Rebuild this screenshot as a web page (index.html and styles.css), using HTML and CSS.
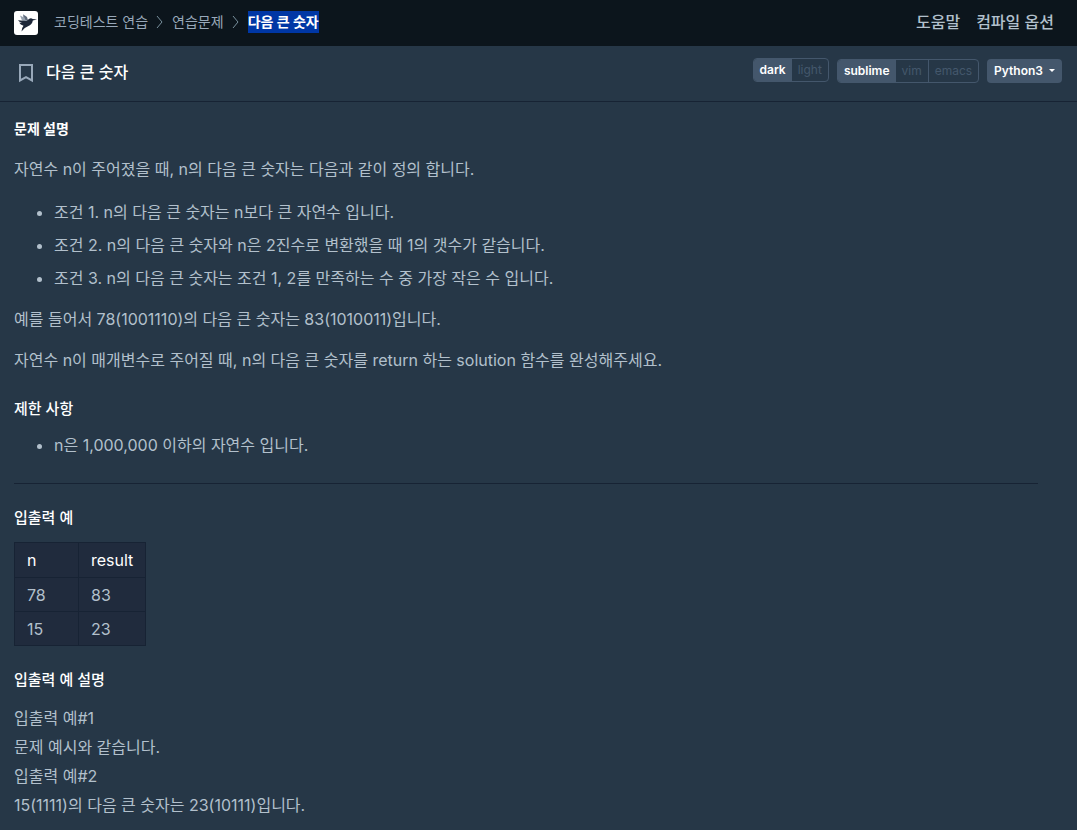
FILE: index.html
```html
<!DOCTYPE html>
<html lang="ko">
<head>
  <meta charset="UTF-8">
  <meta name="viewport" content="width=device-width, initial-scale=1.0">
  <title>다음 큰 숫자</title>
  <link rel="stylesheet" href="styles.css">
</head>
<body>

<header class="navbar">
  <a class="logo" href="#" aria-label="홈">
    <svg width="24" height="24" viewBox="0 0 24 24">
      <rect width="24" height="24" rx="3" fill="#fff"/>
      <path d="M6 4.5 9 6V3.5L13.5 8.5 13 11 8 9.5Z" fill="#98a3b0"/>
      <path d="M9 3.2 13 6 14 9.5 11.5 9Z" fill="#5f6b7c"/>
      <path d="M4 9.3 12.5 10 15.3 7.8Q17 6.8 18.7 8L23 8.6 18.8 9.4Q18.2 13.5 14 15.2 10.8 16.3 7.5 20.5 7.6 17 9.5 14.8 6.2 13.8 5.3 11.7L8 11.8Q5 11 4 9.3Z" fill="#1c2638"/>
    </svg>
  </a>
  <nav class="breadcrumb">
    <a href="#">코딩테스트 연습</a>
    <svg class="chevron" width="8" height="14" viewBox="0 0 8 14"><path d="M1 1l5 6-5 6"/></svg>
    <a href="#">연습문제</a>
    <svg class="chevron" width="8" height="14" viewBox="0 0 8 14"><path d="M1 1l5 6-5 6"/></svg>
    <span class="current">다음 큰 숫자</span>
  </nav>
  <div class="nav-menu">
    <a href="#">도움말</a>
    <a href="#">컴파일 옵션</a>
  </div>
</header>

<div class="challenge-nav">
  <button class="bookmark" type="button" aria-label="북마크">
    <svg width="16" height="20" viewBox="0 0 16 20"><path d="M2 2h12v15.5l-6-3.3-6 3.3z"/></svg>
  </button>
  <h1>다음 큰 숫자</h1>
  <div class="editor-settings">
    <div class="btn-group theme">
      <button type="button" class="active">dark</button>
      <button type="button">light</button>
    </div>
    <div class="btn-group">
      <button type="button" class="active">sublime</button>
      <button type="button">vim</button>
      <button type="button">emacs</button>
    </div>
    <button class="language" type="button">Python3<span class="caret"></span></button>
  </div>
</div>

<main class="description">
  <h2>문제 설명</h2>
  <p>자연수 n이 주어졌을 때, n의 다음 큰 숫자는 다음과 같이 정의 합니다.</p>
  <ul>
    <li>조건 1. n의 다음 큰 숫자는 n보다 큰 자연수 입니다.</li>
    <li>조건 2. n의 다음 큰 숫자와 n은 2진수로 변환했을 때 1의 갯수가 같습니다.</li>
    <li>조건 3. n의 다음 큰 숫자는 조건 1, 2를 만족하는 수 중 가장 작은 수 입니다.</li>
  </ul>
  <p>예를 들어서 78(1001110)의 다음 큰 숫자는 83(1010011)입니다.</p>
  <p>자연수 n이 매개변수로 주어질 때, n의 다음 큰 숫자를 return 하는 solution 함수를 완성해주세요.</p>

  <h3>제한 사항</h3>
  <ul>
    <li>n은 1,000,000 이하의 자연수 입니다.</li>
  </ul>
  <hr>

  <h3>입출력 예</h3>
  <table>
    <thead>
      <tr><th>n</th><th>result</th></tr>
    </thead>
    <tbody>
      <tr><td>78</td><td>83</td></tr>
      <tr><td>15</td><td>23</td></tr>
    </tbody>
  </table>

  <h3>입출력 예 설명</h3>
  <p>입출력 예#1<br>문제 예시와 같습니다.<br>입출력 예#2<br>15(1111)의 다음 큰 숫자는 23(10111)입니다.</p>
</main>

</body>
</html>
```

FILE: styles.css
```css
* {
  box-sizing: border-box;
}

body {
  margin: 0;
  background-color: #263747;
  color: #b2c0cc;
  font-family: Inter, "Noto Sans CJK KR", sans-serif;
  font-size: 16px;
  line-height: 29px;
}

a {
  color: inherit;
  text-decoration: none;
}

button {
  font-family: inherit;
  cursor: pointer;
}

/* 상단 바 */
.navbar {
  display: flex;
  align-items: center;
  height: 46px;
  padding: 0 23px 0 14px;
  background-color: #0c151c;
}

.logo {
  display: flex;
  margin-right: 16px;
}

.breadcrumb {
  display: flex;
  align-items: center;
  gap: 8px;
  padding-bottom: 2px;
  color: #98a8b9;
  font-size: 14px;
  line-height: 22px;
}

.chevron {
  fill: none;
  stroke: #78909c;
}

.current {
  background-color: #0037a5;
  color: #fff;
  font-weight: 700;
}

.nav-menu {
  display: flex;
  gap: 16px;
  margin-left: auto;
  padding-bottom: 2px;
  font-weight: 500;
}

/* 문제 제목, 에디터 설정 */
.challenge-nav {
  display: flex;
  align-items: center;
  height: 56px;
  padding: 0 15px 2px 18px;
  border-bottom: 1px solid #172334;
}

.bookmark {
  display: flex;
  padding: 0;
  border: 0;
  background: none;
}

.bookmark svg {
  fill: none;
  stroke: #98a8b9;
  stroke-width: 2;
}

.challenge-nav h1 {
  margin: 0 0 0 12px;
  color: #fff;
  font-size: 16px;
  font-weight: 500;
}

.editor-settings {
  display: flex;
  align-items: center;
  gap: 8px;
  margin-left: auto;
  padding-bottom: 3px;
}

.btn-group {
  display: flex;
  overflow: hidden;
  border: 1px solid #44576c;
  border-radius: 4px;
}

.theme {
  margin-bottom: 2px;
}

.btn-group button {
  height: 22px;
  padding: 0 6px 2px;
  border: 0;
  background: none;
  color: #44576c;
  font-size: 12px;
  font-weight: 400;
}

.btn-group button + button + button {
  border-left: 1px solid #44576c;
}

.btn-group .active {
  background-color: #44576c;
  color: #fff;
  font-weight: 600;
}

.language {
  display: flex;
  align-items: center;
  height: 24px;
  padding: 0 7px 1px;
  border: 0;
  border-radius: 4px;
  background-color: #44576c;
  color: #fff;
  font-size: 12px;
  font-weight: 600;
}

.caret {
  margin-left: 6px;
  border-top: 3px solid #fff;
  border-right: 3px solid transparent;
  border-left: 3px solid transparent;
}

/* 문제 본문 */
.description {
  padding: 16px 39px 8px 14px;
}

.description h2,
.description h3 {
  margin: 0;
  color: #fff;
  line-height: 22px;
}

.description h2 {
  font-size: 14px;
  font-weight: 700;
}

.description h3 {
  margin-top: 23px;
  font-size: 15px;
  font-weight: 500;
}

.description p {
  margin: 12px 0 0;
}

.description h2 + p {
  margin-top: 15px;
}

.description ul {
  margin: 14px 0 0;
  padding-left: 40px;
}

.description li + li {
  margin-top: 4px;
}

.description h3 + ul {
  margin-top: 11px;
}

.description hr {
  margin: 23px 0 0;
  border: 0;
  border-top: 1px solid #172334;
}

.description table {
  margin-top: 13px;
  border-collapse: collapse;
  background-color: #202b3d;
}

.description h3 + p {
  margin-top: 13px;
}

.description th,
.description td {
  height: 34px;
  padding: 0 12px;
  border: 1px solid #172334;
  line-height: 24px;
  text-align: left;
}

.description th {
  height: 35px;
  min-width: 64px;
  color: #fff;
  font-weight: 400;
}
```
